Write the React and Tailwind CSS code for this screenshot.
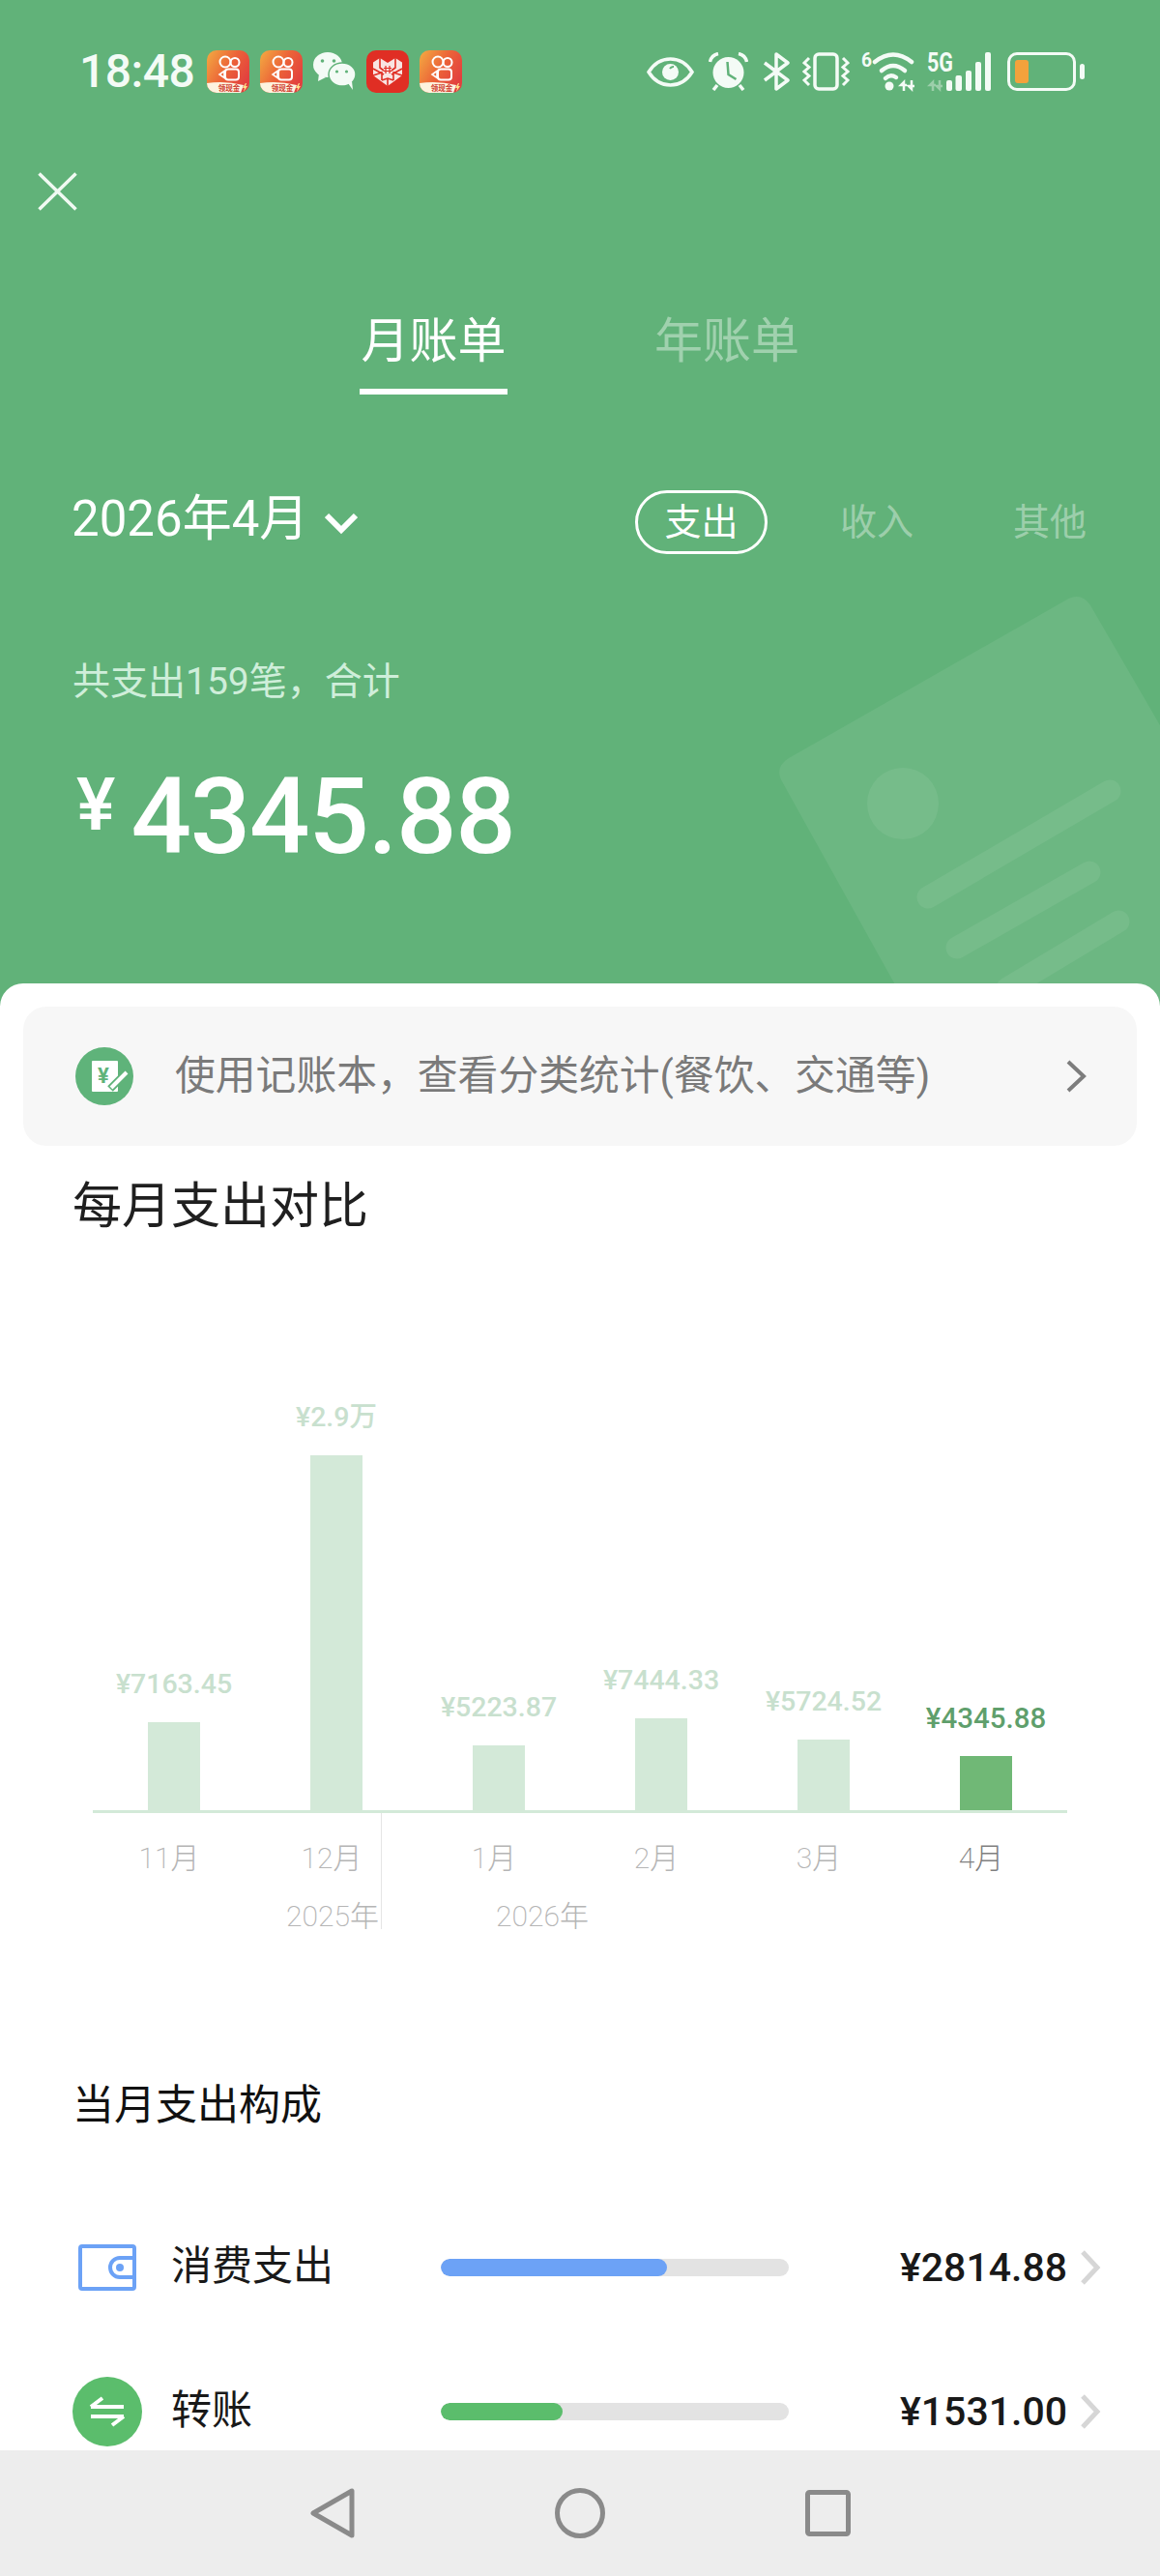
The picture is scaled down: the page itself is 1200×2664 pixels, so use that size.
const GREEN = "#61b279";
const ICON_WHITE = "#f4fbf6";

const chartBars = [
  { month: "11月", label: "¥7163.45", height: 91 },
  { month: "12月", label: "¥2.9万", height: 367 },
  { month: "1月", label: "¥5223.87", height: 67 },
  { month: "2月", label: "¥7444.33", height: 95 },
  { month: "3月", label: "¥5724.52", height: 73 },
  { month: "4月", label: "¥4345.88", height: 56, active: true },
];

function KuaishouIcon({ id }) {
  return (
    <svg width="44" height="44" viewBox="0 0 44 44">
      <defs>
        <linearGradient id={id} x1="0" y1="0" x2="1" y2="0.6">
          <stop offset="0" stopColor="#f3ac42" />
          <stop offset="0.55" stopColor="#ec6338" />
          <stop offset="1" stopColor="#e2403f" />
        </linearGradient>
      </defs>
      <rect width="44" height="44" rx="10" fill={`url(#${id})`} />
      <path d="M0 34Q18 31 38 36L35 44H10A10 10 0 0 1 0 34Z" fill="#fdf3df" />
      <circle cx="19" cy="12" r="5.500" fill="none" stroke="#fff" strokeWidth="2" />
      <circle cx="29" cy="12.500" r="4.500" fill="none" stroke="#fff" strokeWidth="2" />
      <rect x="19" y="19.500" width="14" height="11" rx="3" fill="none" stroke="#fff" strokeWidth="2" />
      <path d="M18 21.500l-5 3.500 5 3.500Z" fill="none" stroke="#fff" strokeWidth="1.600" />
      <text x="23" y="41.500" fontSize="7.500" fontWeight="700" textAnchor="middle" fill="#cf3b2e">领现金</text>
      <path d="M40 34l-3 5h2l-1 4 4-6h-2l1-3Z" fill="#fbe28a" />
    </svg>
  );
}

function WechatIcon() {
  return (
    <svg width="44" height="40" viewBox="0 0 44 40" fill={ICON_WHITE}>
      <ellipse cx="15" cy="13" rx="15" ry="13" />
      <path d="M6 22l-1 8 8-4Z" />
      <ellipse cx="30" cy="23" rx="14" ry="12" stroke={GREEN} strokeWidth="1.500" />
      <path d="M36 32l5 7-1-9Z" />
      <circle cx="9.500" cy="9" r="1.800" fill={GREEN} />
      <circle cx="21.500" cy="9" r="1.800" fill={GREEN} />
      <circle cx="24.500" cy="20" r="1.600" fill={GREEN} />
      <circle cx="34.500" cy="20" r="1.600" fill={GREEN} />
    </svg>
  );
}

function PddIcon() {
  return (
    <svg width="44" height="44" viewBox="0 0 44 44">
      <rect width="44" height="44" rx="10" fill="#e02e24" />
      <path d="M22 13l8-5 7 4.500V26L22 37 7 26V12.500L14 8Z" fill="#f9e4e2" />
      <path d="M7 19l11 6M37 19l-11 6M14 8v10l4 3M30 8v10l-4 3M7 26l9-3v8M37 26l-9-3v8M22 29v8M16 31l6-2 6 2" stroke="#e02e24" strokeWidth="1.600" fill="none" />
      <path d="M20 16v8M24 16v8M18 18.500h8M18 21.500h8" stroke="#e02e24" strokeWidth="1.200" fill="none" />
    </svg>
  );
}

function StatusIcons() {
  return (
    <div className="flex items-center">
      <svg width="49" height="31" viewBox="0 0 49 31" fill="none" stroke={ICON_WHITE} strokeWidth="3.500">
        <path d="M2 15.500C8 6 15 2 24.500 2S41 6 47 15.500C41 25 34 29 24.500 29S8 25 2 15.500Z" />
        <circle cx="24.500" cy="15.500" r="8.500" fill={ICON_WHITE} stroke="none" />
        <path d="M24 12a4 4 0 0 1 4-2" stroke={GREEN} strokeWidth="2" />
      </svg>
      <svg className="ml-[15px]" width="41" height="40" viewBox="0 0 41 40">
        <circle cx="20.500" cy="21" r="16" fill={ICON_WHITE} />
        <path d="M19.500 10l1 13 8 5" fill="none" stroke={GREEN} strokeWidth="2.500" />
        <path d="M1.500 10Q3 3 10 1.500M39.500 10Q38 3 31 1.500" fill="none" stroke={ICON_WHITE} strokeWidth="3.500" />
        <path d="M9 34l-4 5M32 34l4 5" stroke={ICON_WHITE} strokeWidth="3.500" />
      </svg>
      <svg className="ml-[15px]" width="28" height="40" viewBox="0 0 28 40" fill="none" stroke={ICON_WHITE} strokeWidth="3.500" strokeLinejoin="round">
        <path d="M2 11l24 18-12 9V2l12 9L2 29" />
      </svg>
      <svg className="ml-[13px]" width="49" height="40" viewBox="0 0 49 40" fill="none" stroke={ICON_WHITE} strokeWidth="3.500">
        <rect x="13" y="2" width="23" height="36" rx="4" />
        <path d="M7 6L2 11l5 4.500-5 4.500 5 4.500-5 4.500 5 5M42 6l5 5-5 4.500 5 4.500-5 4.500 5 4.500-5 5" strokeWidth="3" />
      </svg>
      <svg className="ml-[12px] -my-[6px]" width="56" height="52" viewBox="0 -6 56 52" fill="none" stroke={ICON_WHITE} strokeWidth="4.500" strokeLinecap="round">
        <text x="0" y="15" fontSize="21" fontWeight="700" fill={ICON_WHITE} stroke="none" textLength="11" lengthAdjust="spacingAndGlyphs">6</text>
        <path d="M14 10Q33 -5 52 10" />
        <path d="M21 19Q33 9 45 19" />
        <path d="M25 27Q30 22 36 26" />
        <circle cx="29" cy="35" r="4.500" fill={ICON_WHITE} stroke="none" />
        <path d="M44 40V31l-3 3h6M52 29v9l-3-3h6" strokeWidth="2.500" strokeLinecap="butt" />
      </svg>
      <svg className="ml-[12px] -my-[6px]" width="66" height="52" viewBox="0 -6 66 52" fill={ICON_WHITE}>
        <text x="0" y="20" fontSize="27" fontWeight="700" textLength="27" lengthAdjust="spacingAndGlyphs">5G</text>
        <path d="M6 40V31l-3 3h6M13 29v9l-3-3h6" fill="none" stroke={ICON_WHITE} strokeOpacity="0.4" strokeWidth="2.500" />
        <rect x="20" y="29" width="6" height="11" rx="2" />
        <rect x="29.500" y="24" width="6.500" height="16" rx="2" />
        <rect x="40" y="19" width="6" height="21" rx="2" />
        <rect x="50" y="10" width="6" height="30" rx="2" />
        <rect x="60" y="0" width="6" height="40" rx="2" />
      </svg>
      <div className="ml-[17px] w-[71px] h-[40px] rounded-[10px] border-[3px] border-[#f4fbf6] p-[5px]">
        <div className="w-[14px] h-full rounded-[3px] bg-[#f3a23c]" />
      </div>
      <div className="ml-[4px] w-[5px] h-[16px] rounded-full bg-[#f4fbf6]" />
    </div>
  );
}

function HeaderDecoration() {
  return (
    <svg className="absolute left-[780px] top-[600px]" width="420" height="440" viewBox="0 0 420 440">
      <path d="M322 21Q338 11 348 26L420 150V440H158L30 210Q20 194 36 184Z" fill="#fff" fillOpacity="0.07" />
      <circle cx="154" cy="231" r="37" fill="#fff" fillOpacity="0.07" />
      <path d="M180 328L368 218M210 380L347 302M262 422L377 353" stroke="#fff" strokeOpacity="0.07" strokeWidth="23" strokeLinecap="round" />
    </svg>
  );
}

function ChartColumn({ bar }) {
  return (
    <div className="w-[168px] flex flex-col items-center justify-end">
      <div className={`mb-[22px] leading-[34px] font-medium whitespace-nowrap ${bar.active ? "text-[29.5px] text-[#5f9f6c]" : "text-[28.5px] text-[#c8e0ce]"}`}>
        {bar.label}
      </div>
      <div
        className={`w-[54px] ${bar.active ? "bg-[#70b876]" : "bg-[#d3e9d8]"}`}
        style={{ height: bar.height }}
      />
    </div>
  );
}

function ExpenseRow({ icon, name, amount, fill, percent, className = "" }) {
  return (
    <div className={`flex items-center h-[80px] pl-[75px] pr-[61px] ${className}`}>
      <div className="w-[72px] h-[72px] flex items-center justify-center">{icon}</div>
      <div className="ml-[30px] w-[279px] pb-[3px] text-[42px] leading-[52px] text-[#191919]">{name}</div>
      <div className="w-[360px] h-[18px] rounded-full bg-[#e3e3e3] overflow-hidden">
        <div className={`h-full rounded-full ${fill}`} style={{ width: percent }} />
      </div>
      <div className="flex-1 text-right text-[41px] leading-[52px] font-medium text-[#191919]">{amount}</div>
      <svg className="ml-[13px] shrink-0" width="22" height="36" viewBox="0 0 22 36" fill="none" stroke="#d6d6d6" strokeWidth="5">
        <path d="M3 2l15 16L3 34" />
      </svg>
    </div>
  );
}

export default function App() {
  return (
    <div className="w-[1200px] h-[2664px] overflow-hidden bg-white flex flex-col font-['Roboto','Noto_Sans_CJK_SC',sans-serif]">
      <div className="relative h-[1040px] shrink-0 -mb-[23px] bg-[#61b279] overflow-hidden">
        <HeaderDecoration />

        <div className="relative">
          <div className="flex items-center justify-between h-[44px] mt-[52px] pl-[82px] pr-[78px]">
            <div className="flex items-center">
              <span className="w-[132px] text-[48px] leading-[44px] tracking-[-0.5px] font-medium text-[#f4fbf6]">18:48</span>
              <div className="flex items-center gap-[11px]">
                <KuaishouIcon id="ks1" />
                <KuaishouIcon id="ks2" />
                <WechatIcon />
                <PddIcon />
                <KuaishouIcon id="ks3" />
              </div>
            </div>
            <StatusIcons />
          </div>

          <svg className="ml-[39px] mt-[82px]" width="41" height="40" viewBox="0 0 41 40" stroke="#f1faf3" strokeWidth="3.500">
            <path d="M1.500 1.500l38 37M39.500 1.500l-38 37" />
          </svg>

          <div className="ml-[372px] mt-[99px] flex gap-[152px]">
            <div className="w-[153px] flex flex-col items-center">
              <span className="text-[50px] leading-[72px] text-white whitespace-nowrap">月账单</span>
              <div className="mt-[13px] w-[153px] h-[6px] bg-white" />
            </div>
            <span className="text-[50px] leading-[72px] text-white/40 whitespace-nowrap">年账单</span>
          </div>

          <div className="mt-[99px] h-[66px] pl-[74px] pr-[76px] flex items-center">
            <span className="pb-[6px] text-[51px] leading-[66px] text-white whitespace-nowrap">2026年4月</span>
            <svg className="ml-[17px] mt-[2px]" width="34" height="24" viewBox="0 0 34 24" fill="none" stroke="#fff" strokeWidth="6">
              <path d="M2 4l15 15L32 4" />
            </svg>
            <div className="ml-auto flex items-center">
              <div className="w-[137px] h-[66px] rounded-full border-[3px] border-white flex items-center justify-center text-[38px] text-white">支出</div>
              <span className="ml-[75px] text-[38px] leading-[52px] text-white/40">收入</span>
              <span className="ml-[103px] text-[38px] leading-[52px] text-white/40">其他</span>
            </div>
          </div>

          <div className="ml-[75px] mt-[108px] text-[39px] leading-[48px] text-[#cfeeda]">共支出159笔，合计</div>

          <div className="ml-[79px] mt-[61px] flex items-start text-white font-medium">
            <span className="mt-[4px] mr-[16px] text-[76px] leading-[76px]">¥</span>
            <span className="text-[110px] leading-[110px] tracking-[-1.2px]">4345.88</span>
          </div>
        </div>
      </div>

      <div className="relative flex-1 min-h-0 overflow-hidden rounded-t-[24px] bg-white">
        <div className="mx-[24px] mt-[24px] h-[144px] rounded-[24px] bg-[#f7f7f7] flex items-center pl-[54px] pr-[52px]">
          <svg width="60" height="60" viewBox="0 0 60 60">
            <circle cx="30" cy="30" r="30" fill="#5fb37a" />
            <rect x="17" y="14" width="27" height="32" rx="1" fill="#fff" />
            <text x="29" y="37" fontSize="22" fontWeight="700" textAnchor="middle" fill="#5fb37a">¥</text>
            <path d="M36 43L53 26" stroke="#5fb37a" strokeWidth="8" />
            <path d="M37 42L53 26" stroke="#fff" strokeWidth="4" />
          </svg>
          <span className="ml-[43px] text-[41.8px] leading-[52px] text-[#7a7a7a] whitespace-nowrap">使用记账本，查看分类统计(餐饮、交通等)</span>
          <svg className="ml-auto" width="22" height="36" viewBox="0 0 22 36" fill="none" stroke="#7d7d7d" strokeWidth="4">
            <path d="M3 3l16 15L3 33" />
          </svg>
        </div>

        <div className="ml-[75px] mt-[31px] text-[51px] leading-[64px] text-[#1f1f1f]">每月支出对比</div>

        <div className="relative ml-[96px] mt-[161px] w-[1008px]">
          <div className="h-[434px] flex items-end border-b-[3px] border-[#d3e9d8]">
            {chartBars.map(bar => (
              <ChartColumn key={bar.month} bar={bar} />
            ))}
          </div>
          <div className="flex pt-[25px] text-[30px] leading-[44px] font-extralight text-[#b5b5b5]">
            {chartBars.map(bar => (
              <div key={bar.month} className={`w-[168px] pr-[10px] text-center ${bar.active ? "text-[#808080]" : ""}`}>
                {bar.month}
              </div>
            ))}
          </div>
          <div className="mt-[16px] pl-[200px] flex gap-[121px] text-[30px] leading-[44px] font-extralight text-[#b5b5b5]">
            <span>2025年</span>
            <span>2026年</span>
          </div>
          <div className="absolute left-[298px] top-[434px] w-px h-[120px] bg-[#e5e5e5]" />
        </div>

        <div className="ml-[75px] mt-[144px] text-[43px] leading-[58px] text-[#111]">当月支出构成</div>

        <div className="mt-[99px]">
          <ExpenseRow
            name="消费支出"
            amount="¥2814.88"
            percent="65%"
            fill="bg-[#6ca2f6]"
            icon={
              <svg width="60" height="48" viewBox="0 0 60 48" fill="none" stroke="#6ca2f6" strokeWidth="4">
                <rect x="2" y="2" width="56" height="44" rx="2" />
                <path d="M58 14H43a10 10 0 0 0 0 20H58" />
                <circle cx="43" cy="24" r="4" fill="#6ca2f6" stroke="none" />
              </svg>
            }
          />
          <ExpenseRow
            name="转账"
            amount="¥1531.00"
            percent="35%"
            fill="bg-[#5bbd6c]"
            className="mt-[69px]"
            icon={
              <svg width="72" height="72" viewBox="0 0 72 72">
                <circle cx="36" cy="36" r="36" fill="#5bbd6c" />
                <path d="M19 31h34M19 31l12-9M53 41H19M53 41l-12 9" fill="none" stroke="#fff" strokeWidth="4" />
              </svg>
            }
          />
        </div>
      </div>

      <div className="h-[130px] shrink-0 bg-[#ededed] flex items-center pl-[321px] gap-[207px]">
        <svg width="46" height="52" viewBox="0 0 46 52" fill="none" stroke="#8a8a8a" strokeWidth="5" strokeLinejoin="round">
          <path d="M43 3v46L3 26Z" />
        </svg>
        <svg width="52" height="52" viewBox="0 0 52 52" fill="none" stroke="#8a8a8a" strokeWidth="5">
          <circle cx="26" cy="26" r="23.500" />
        </svg>
        <svg width="47" height="48" viewBox="0 0 47 48" fill="none" stroke="#8a8a8a" strokeWidth="5">
          <rect x="2.500" y="2.500" width="42" height="43" rx="2" />
        </svg>
      </div>
    </div>
  );
}
